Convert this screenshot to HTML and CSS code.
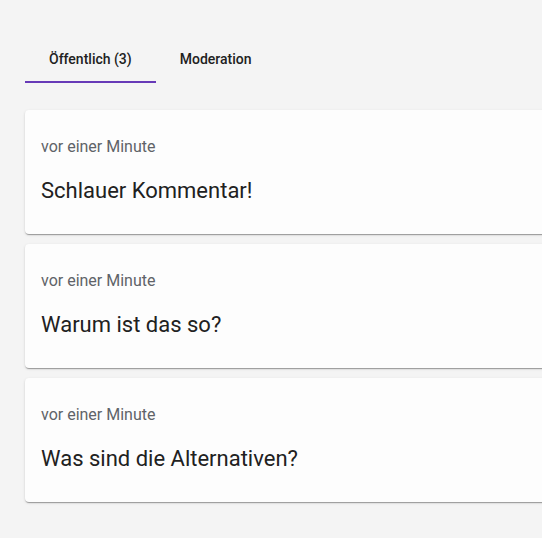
FILE: index.html
```html
<!DOCTYPE html>
<html lang="de">
<head>
<meta charset="utf-8">
<link rel="stylesheet" href="styles.css">
</head>
<body>
<div class="page">
  <nav class="tabs">
    <div class="tab active">Öffentlich (3)</div>
    <div class="tab">Moderation</div>
  </nav>
  <div class="list">
    <div class="card">
      <div class="time">vor einer Minute</div>
      <div class="text">Schlauer Kommentar!</div>
    </div>
    <div class="card">
      <div class="time">vor einer Minute</div>
      <div class="text">Warum ist das so?</div>
    </div>
    <div class="card">
      <div class="time">vor einer Minute</div>
      <div class="text">Was sind die Alternativen?</div>
    </div>
  </div>
</div>
</body>
</html>
```
FILE: styles.css
```css
html, body {
  margin: 0;
  padding: 0;
  background: #f4f4f4;
  overflow: hidden;
  font-family: Roboto, "Liberation Sans", sans-serif;
}
.page {
  width: 542px;
  box-sizing: border-box;
  padding: 36px 0 0 25px;
  overflow: hidden;
}
.tabs {
  display: flex;
  height: 47px;
}
.tab {
  padding: 0 24px;
  font-size: 14px;
  font-weight: 500;
  color: #212121;
  display: flex;
  align-items: center;
  justify-content: center;
  box-sizing: border-box;
  border-bottom: 2px solid transparent;
}
.tab.active {
  border-bottom-color: #673ab7;
}
.list {
  margin-top: 27px;
  margin-right: -8px;
  padding-bottom: 4px;
  display: flex;
  flex-direction: column;
  gap: 10px;
}
.card {
  background: #fdfdfd;
  border-radius: 4px;
  height: 124px;
  box-sizing: border-box;
  padding: 27px 16px 0;
  box-shadow: 0 2px 1px -1px rgba(0,0,0,.2), 0 1px 1px 0 rgba(0,0,0,.14), 0 1px 3px 0 rgba(0,0,0,.12);
}
.time {
  font-size: 16px;
  line-height: 20px;
  color: #5f6368;
}
.text {
  margin-top: 20px;
  font-size: 22px;
  line-height: 28px;
  color: #212121;
}
```
